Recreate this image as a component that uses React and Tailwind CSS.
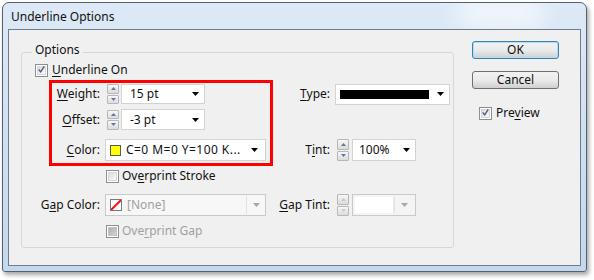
import React from "react";

const FONT = { fontFamily: '"Noto Sans", "DejaVu Sans", sans-serif' };

function Arrow({ disabled }) {
  return (
    <svg width="7" height="4" viewBox="0 0 7 4" className="shrink-0">
      <path d="M0 0 H7 L3.5 4 Z" fill={disabled ? "#a8a8a8" : "#000"} />
    </svg>
  );
}

function Spin({ up, disabled }) {
  const c = disabled ? "#c9c9c9" : "#6474a0";
  return (
    <div className="flex-1 border border-[#b7b7b7] rounded-[1px] bg-gradient-to-b from-[#f7f7f7] to-[#dcdcdc] flex items-center justify-center">
      <svg width="5" height="3" viewBox="0 0 5 3">
        <path d={up ? "M0 3 L2.5 0 L5 3 Z" : "M0 0 L5 0 L2.5 3 Z"} fill={c} />
      </svg>
    </div>
  );
}

function Spinner({ tall, disabled }) {
  return (
    <div className={"flex flex-col gap-[1px] w-[12px] " + (tall ? "h-[22px]" : "h-[20px]")}>
      <Spin up disabled={disabled} />
      <Spin disabled={disabled} />
    </div>
  );
}

function Check({ checked, disabled }) {
  return (
    <div className="w-[13px] h-[13px] border border-[#8e8f8f] bg-white p-[1px] shrink-0">
      <div
        className={
          "w-full h-full flex items-center justify-center " +
          (disabled
            ? "bg-gradient-to-br from-[#b0b0b0] to-[#d2d2d2] border border-[#c4c4c4]"
            : "bg-gradient-to-br from-[#dcdcdc] to-[#fbfbfb] border border-[#d8d8d8]")
        }
      >
        {checked && (
          <svg width="9" height="9" viewBox="0 0 9 9" className="-mt-[1px]">
            <path d="M1 4.5 L3.5 7.5 L8 0.5" stroke="#4a5f8a" strokeWidth="1.8" fill="none" />
          </svg>
        )}
      </div>
    </div>
  );
}

function U({ children }) {
  return <span className="underline underline-offset-[2px] decoration-[1px]">{children}</span>;
}

export default function App() {
  return (
    <div className="w-[594px] h-[280px] bg-white pt-[2px] pl-[2px] text-[12px] leading-[16px] text-[#111]" style={FONT}>
      <div className="relative w-[585px] h-[270px] rounded-t-[7px] rounded-b-[3px] border border-[#56616d] bg-gradient-to-b from-[#dde9f6] via-[#cfe0f3] to-[#c3d8ef] shadow-[2px_3px_4px_rgba(0,0,0,0.35)] flex flex-col px-[5px] pb-[5px] overflow-hidden">
        <div className="absolute right-[40px] -top-[10px] w-[90px] h-[40px] rounded-full bg-[#f2f7fc] blur-[10px] opacity-80 pointer-events-none" />
        <div className="relative h-[26px] flex items-center pl-[3px] pt-[1px] shrink-0 text-[12px]">Underline Options</div>
        <div className="relative flex-1 border border-[#707c89] bg-[#f0f0f0] flex items-start">
          {/* Group box */}
          <div className="relative ml-[12px] mt-[22px] w-[433px] h-[196px] border border-[#d0d9df] rounded-[3px] flex flex-col">
            <span className="absolute left-[10px] -top-[11px] px-[3px] bg-[#f0f0f0]">Options</span>

            {/* Underline On */}
            <div className="mt-[7px] h-[20px] flex items-center pl-[13px] gap-[4px]">
              <Check checked />
              <span><U>U</U>nderline On</span>
            </div>

            {/* Weight / Type */}
            <div className="mt-[4px] h-[20px] flex items-center">
              <div className="w-[78px] text-right"><U>W</U>eight:</div>
              <div className="w-[161px] ml-[5px] flex items-center">
                <div className="ml-[2px]"><Spinner /></div>
                <div className="ml-[2px] w-[84px] h-[20px] bg-white border border-[#d3d3d3] flex items-center justify-between pl-[8px] pr-[5px]">
                  <span>15 pt</span>
                  <Arrow />
                </div>
              </div>
              <div className="w-[64px] text-right"><U>T</U>ype:</div>
              <div className="ml-[5px] w-[115px] h-[21px] bg-white border border-[#d3d3d3] flex items-center justify-between pl-[4px] pr-[5px]">
                <div className="w-[89px] h-[9px] bg-black" />
                <Arrow />
              </div>
            </div>

            {/* Offset */}
            <div className="mt-[5px] h-[21px] flex items-center">
              <div className="w-[78px] text-right"><U>O</U>ffset:</div>
              <div className="w-[161px] ml-[5px] flex items-center">
                <div className="ml-[2px]"><Spinner /></div>
                <div className="ml-[2px] w-[84px] h-[21px] bg-white border border-[#d3d3d3] flex items-center justify-between pl-[8px] pr-[5px]">
                  <span>-3 pt</span>
                  <Arrow />
                </div>
              </div>
            </div>

            {/* Color / Tint */}
            <div className="mt-[9px] h-[22px] flex items-center">
              <div className="w-[78px] text-right"><U>C</U>olor:</div>
              <div className="w-[161px] ml-[5px] h-[22px] bg-white border border-[#d3d3d3] flex items-center pl-[4px] pr-[7px]">
                <div className="w-[11px] h-[11px] border border-[#5a5a5a] bg-[#ffff00] shrink-0" />
                <span className="ml-[5px] flex-1 whitespace-nowrap tracking-[0.45px]">C=0 M=0 Y=100 K...</span>
                <Arrow />
              </div>
              <div className="w-[64px] text-right">T<U>i</U>nt:</div>
              <div className="ml-[7px]"><Spinner tall /></div>
              <div className="ml-[3px] w-[64px] h-[22px] bg-white border border-[#d3d3d3] flex items-center justify-between pl-[6px] pr-[5px]">
                <span>100%</span>
                <Arrow />
              </div>
            </div>

            {/* Overprint Stroke */}
            <div className="mt-[5px] h-[20px] flex items-center">
              <div className="w-[78px]" />
              <div className="ml-[6px] flex items-center gap-[3px]">
                <Check />
                <span>Ov<U>e</U>rprint Stroke</span>
              </div>
            </div>

            {/* Gap Color / Gap Tint */}
            <div className="mt-[8px] h-[22px] flex items-center">
              <div className="w-[78px] text-right">G<U>a</U>p Color:</div>
              <div className="w-[161px] ml-[5px] h-[22px] bg-[#f7f7f7] border border-[#c9c9c9] flex items-center pl-[4px]">
                <div className="w-[12px] h-[12px] border border-[#7a7a7a] bg-white shrink-0 relative overflow-hidden">
                  <svg width="10" height="10" viewBox="0 0 10 10" className="block">
                    <path d="M0 10 L10 0" stroke="#ff1010" strokeWidth="2" />
                  </svg>
                </div>
                <span className="ml-[5px] flex-1 text-[#a0a0a0]">[None]</span>
                <div className="w-[1px] h-[18px] bg-[#e2e2e2]" />
                <div className="w-[18px] flex justify-center"><Arrow disabled /></div>
              </div>
              <div className="w-[64px] text-right"><U>G</U>ap Tint:</div>
              <div className="ml-[7px]"><Spinner tall disabled /></div>
              <div className="ml-[3px] w-[64px] h-[22px] bg-[#f4f4f4] border border-[#c9c9c9] flex items-center p-[2px]">
                <div className="w-[40px] h-full bg-white border-r-[2px] border-[#e6e6e6]" />
                <div className="flex-1 flex justify-center"><Arrow disabled /></div>
              </div>
            </div>

            {/* Overprint Gap */}
            <div className="mt-[5px] h-[20px] flex items-center">
              <div className="w-[78px]" />
              <div className="ml-[6px] flex items-center gap-[3px] text-[#a0a0a0]">
                <Check disabled />
                <span>Ove<U>r</U>print Gap</span>
              </div>
            </div>

            {/* Red annotation */}
            <div className="absolute left-[27px] top-[27px] w-[224px] h-[86px] border-[3px] border-[#ff0000] pointer-events-none" />
          </div>

          {/* Buttons */}
          <div className="ml-[18px] mt-[11px] w-[87px] flex flex-col">
            <button className="h-[18px] rounded-[3px] border border-[#3c7fb1] bg-gradient-to-b from-[#f2f2f2] via-[#ebebeb] to-[#cfcfcf] shadow-[inset_0_0_0_1px_#aee0f7] flex items-center justify-center leading-none">
              OK
            </button>
            <button className="mt-[12px] h-[18px] rounded-[3px] border border-[#707070] bg-gradient-to-b from-[#f2f2f2] via-[#ebebeb] to-[#cfcfcf] flex items-center justify-center leading-none">
              Cancel
            </button>
            <div className="mt-[16px] ml-[7px] flex items-center gap-[4px]">
              <Check checked />
              <span>Pre<U>v</U>iew</span>
            </div>
          </div>
        </div>
      </div>
    </div>
  );
}
